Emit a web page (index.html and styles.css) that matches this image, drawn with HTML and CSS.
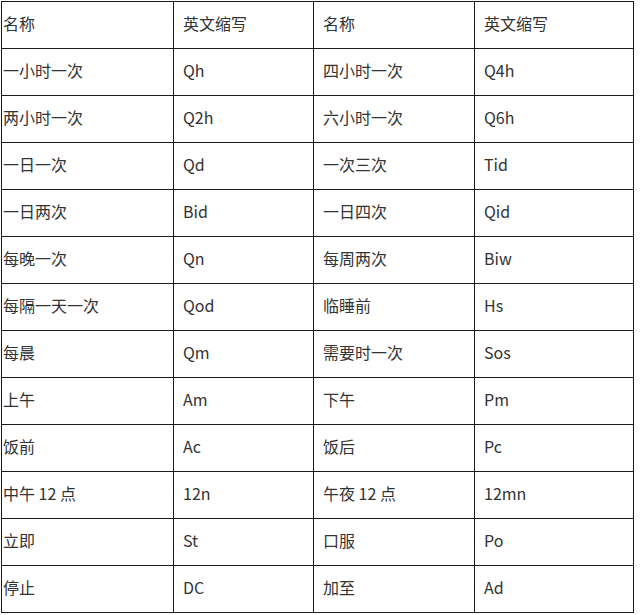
FILE: index.html
```html
<!DOCTYPE html>
<html lang="zh">
<head>
<meta charset="utf-8">
<title>英文缩写</title>
<link rel="stylesheet" href="styles.css">
</head>
<body>
<table class="abbr">
  <colgroup>
    <col class="c1"><col class="c2"><col class="c3"><col class="c4">
  </colgroup>
  <tbody>
    <tr><td class="first">名称</td><td>英文缩写</td><td>名称</td><td>英文缩写</td></tr>
    <tr><td class="first">一小时一次</td><td>Qh</td><td>四小时一次</td><td>Q4h</td></tr>
    <tr><td class="first">两小时一次</td><td>Q2h</td><td>六小时一次</td><td>Q6h</td></tr>
    <tr><td class="first">一日一次</td><td>Qd</td><td>一次三次</td><td>Tid</td></tr>
    <tr><td class="first">一日两次</td><td>Bid</td><td>一日四次</td><td>Qid</td></tr>
    <tr><td class="first">每晚一次</td><td>Qn</td><td>每周两次</td><td>Biw</td></tr>
    <tr><td class="first">每隔一天一次</td><td>Qod</td><td>临睡前</td><td>Hs</td></tr>
    <tr><td class="first">每晨</td><td>Qm</td><td>需要时一次</td><td>Sos</td></tr>
    <tr><td class="first">上午</td><td>Am</td><td>下午</td><td>Pm</td></tr>
    <tr><td class="first">饭前</td><td>Ac</td><td>饭后</td><td>Pc</td></tr>
    <tr><td class="first">中午 12 点</td><td>12n</td><td>午夜 12 点</td><td>12mn</td></tr>
    <tr><td class="first">立即</td><td>St</td><td>口服</td><td>Po</td></tr>
    <tr><td class="first">停止</td><td>DC</td><td>加至</td><td>Ad</td></tr>
  </tbody>
</table>
</body>
</html>
```

FILE: styles.css
```css
html, body {
  margin: 0;
  padding: 0;
  background: #ffffff;
}

body {
  padding: 1px 0 0 1px;
  font-family: "Noto Sans CJK SC", "Noto Sans", sans-serif;
  font-size: 16px;
  color: #333333;
}

.abbr {
  border-collapse: collapse;
  table-layout: fixed;
  width: 633px;
}

.abbr .c1 { width: 172px; }
.abbr .c2 { width: 140px; }
.abbr .c3 { width: 161px; }
.abbr .c4 { width: 159px; }

.abbr td {
  border: 1px solid #1a1a1a;
  height: 47px;
  padding: 0 0 4px 9px;
  vertical-align: middle;
  line-height: 20px;
  white-space: nowrap;
  box-sizing: border-box;
}

.abbr td.first {
  padding-left: 1px;
}
```
